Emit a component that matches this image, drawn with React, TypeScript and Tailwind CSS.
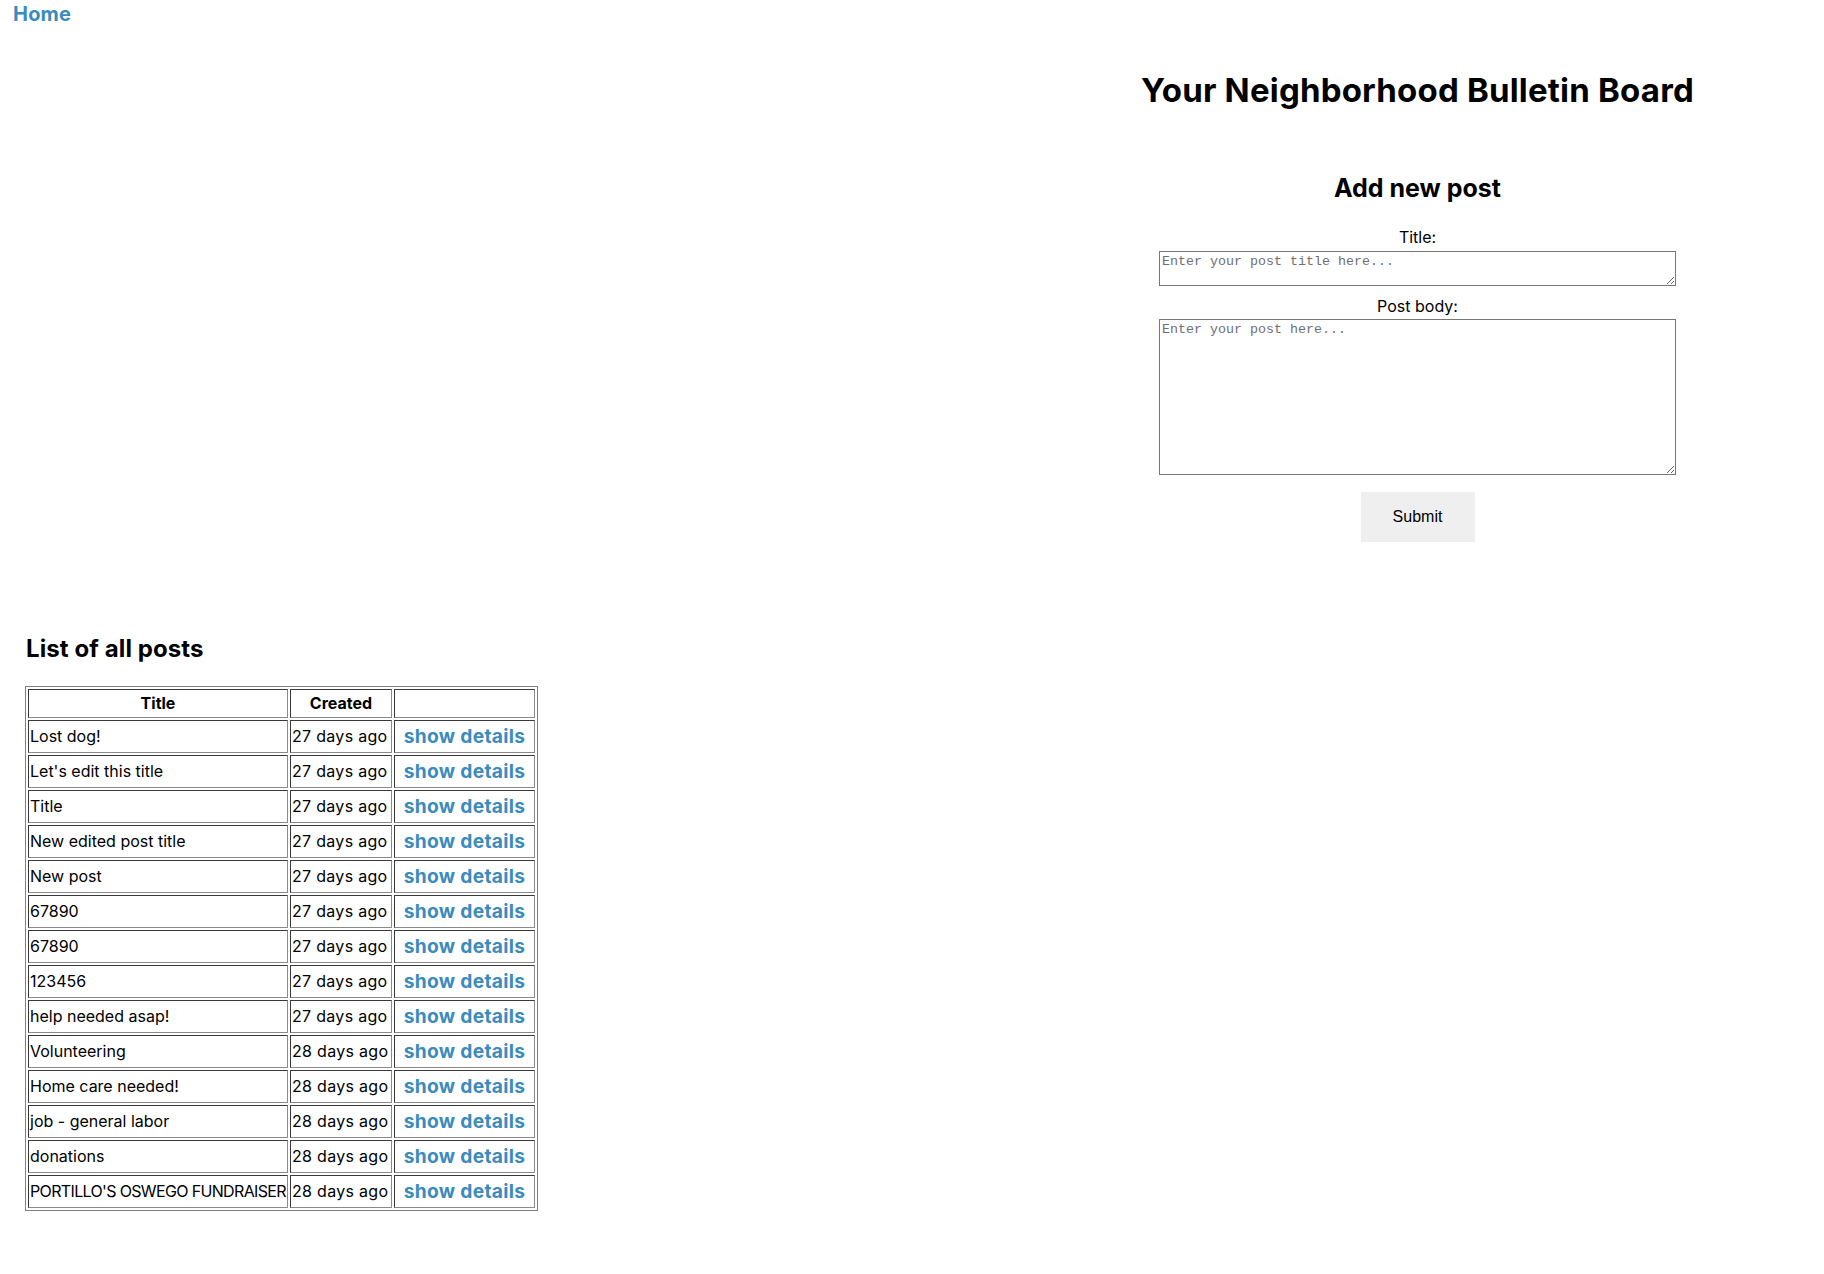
import React from "react";

const posts: [string, string][] = [
  ["Lost dog!", "27 days ago"],
  ["Let's edit this title", "27 days ago"],
  ["Title", "27 days ago"],
  ["New edited post title", "27 days ago"],
  ["New post", "27 days ago"],
  ["67890", "27 days ago"],
  ["67890", "27 days ago"],
  ["123456", "27 days ago"],
  ["help needed asap!", "27 days ago"],
  ["Volunteering", "28 days ago"],
  ["Home care needed!", "28 days ago"],
  ["job - general labor", "28 days ago"],
  ["donations", "28 days ago"],
  ["PORTILLO'S OSWEGO FUNDRAISER", "28 days ago"],
];

const cell =
  "border border-t-[#3a3a3a] border-l-[#3a3a3a] border-r-[#8a8a8a] border-b-[#8a8a8a] p-[1px]";

export default function App() {
  return (
    <div className="min-h-[1274px] w-full bg-white text-black font-['Inter','Noto_Sans',sans-serif]">
      <nav className="h-[28px] pl-[13px]">
        <a href="#" className="text-[20px] leading-[28px] font-bold text-[#3b8bbd] tracking-[0.2px]">
          Home
        </a>
      </nav>

      <div className="flex">
        <div className="flex-1" />
        <div className="w-[813px] flex flex-col items-center">
          <h1 className="mt-[38px] text-[33px] leading-[48px] font-bold tracking-[0.2px]">
            Your Neighborhood Bulletin Board
          </h1>
          <h2 className="mt-[56px] text-[25px] leading-[36px] font-bold">Add new post</h2>
          <form className="flex flex-col items-center" onSubmit={(e) => e.preventDefault()}>
            <label className="mt-[19px] text-[16px] leading-[24px]">Title:</label>
            <textarea
              className="mt-[2px] w-[517px] h-[35px] border border-[#767676] p-[2px] font-['Liberation_Mono',monospace] text-[13.33px] leading-[15px] placeholder:text-[#6f6f6f]"
              placeholder="Enter your post title here..."
            />
            <label className="mt-[8px] text-[16px] leading-[24px]">Post body:</label>
            <textarea
              className="mt-[1px] w-[517px] h-[156px] border border-[#767676] p-[2px] font-['Liberation_Mono',monospace] text-[13.33px] leading-[15px] placeholder:text-[#6f6f6f]"
              placeholder="Enter your post here..."
            />
            <button
              type="submit"
              className="mt-[17px] w-[114px] h-[50px] bg-[#efefef] font-['Liberation_Sans',Arial,sans-serif] text-[16px] text-black"
            >
              Submit
            </button>
          </form>
        </div>
      </div>

      <section className="pl-[26px]">
        <h2 className="mt-[89px] text-[24px] leading-[36px] font-bold tracking-[0.1px]">List of all posts</h2>
        <table className="mt-[19px] -ml-[1px] border border-[#808080] border-separate border-spacing-[2px] text-[16px]">
          <thead>
            <tr>
              <th className={`${cell} w-[260px] leading-[25px] font-bold text-center`}>Title</th>
              <th className={`${cell} w-[102px] leading-[25px] font-bold text-center`}>Created</th>
              <th className={`${cell} w-[141px] leading-[25px]`}></th>
            </tr>
          </thead>
          <tbody>
            {posts.map(([t, c], i) => (
              <tr key={i}>
                <td
                  className={`${cell} leading-[29px] whitespace-nowrap text-left ${
                    t === t.toUpperCase() && /[A-Z]/.test(t) ? "tracking-[-0.65px]" : ""
                  }`}
                >
                  {t}
                </td>
                <td className={`${cell} leading-[29px] whitespace-nowrap tracking-[0.3px]`}>{c}</td>
                <td className={`${cell} leading-[29px] text-center`}>
                  <a
                    href="#"
                    className="inline-block align-top leading-[29px] text-[19.2px] font-bold text-[#3b8bbd] tracking-[0.3px]"
                  >
                    show details
                  </a>
                </td>
              </tr>
            ))}
          </tbody>
        </table>
      </section>
    </div>
  );
}
